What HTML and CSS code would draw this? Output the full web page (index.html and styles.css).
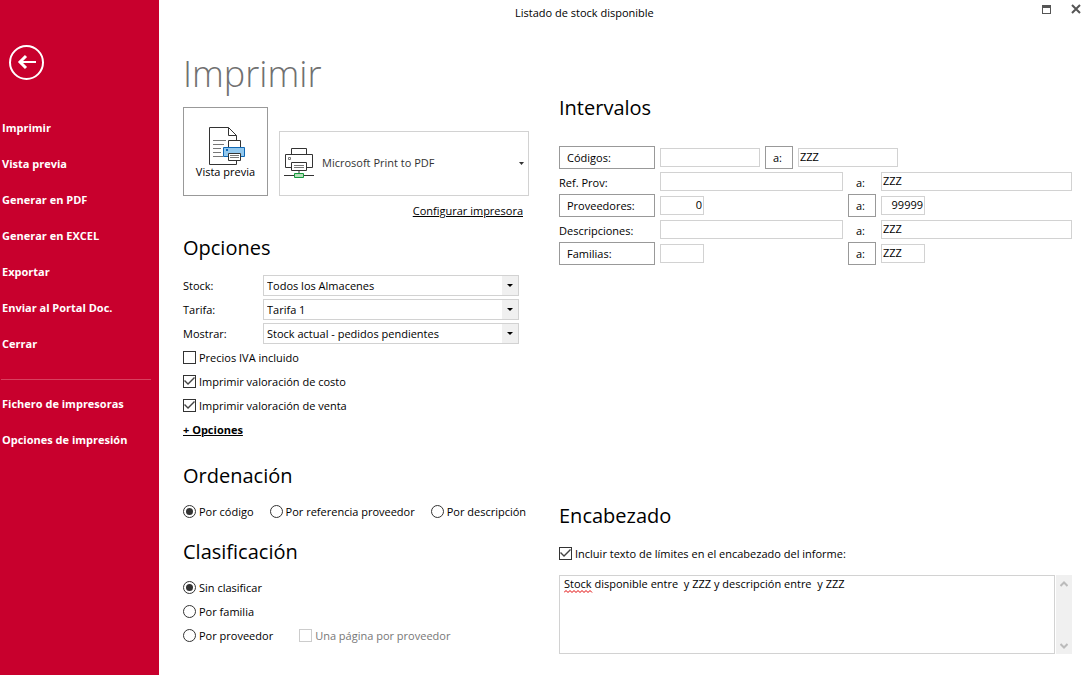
FILE: index.html
```html
<!DOCTYPE html>
<html lang="es">
<head>
<meta charset="utf-8">
<title>Listado de stock disponible</title>
<link rel="stylesheet" href="styles.css">
</head>
<body>
<div class="app">
  <nav class="sidebar">
    <button class="back" type="button" aria-label="Volver">
      <svg width="36" height="36" viewBox="0 0 36 36" fill="none" stroke="#fff">
        <circle cx="17.500" cy="17.500" r="16.500" stroke-width="2"/>
        <path d="M27 17H10.500" stroke-width="2"/>
        <path d="M17 11l-6 6 6 6" stroke-width="3"/>
      </svg>
    </button>
    <ul class="menu">
      <li><a href="#">Imprimir</a></li>
      <li><a href="#">Vista previa</a></li>
      <li><a href="#">Generar en PDF</a></li>
      <li><a href="#">Generar en EXCEL</a></li>
      <li><a href="#">Exportar</a></li>
      <li><a href="#">Enviar al Portal Doc.</a></li>
      <li><a href="#">Cerrar</a></li>
    </ul>
    <hr class="separator">
    <ul class="menu">
      <li><a href="#">Fichero de impresoras</a></li>
      <li><a href="#">Opciones de impresión</a></li>
    </ul>
  </nav>

  <div class="window">
    <header class="titlebar">
      <span class="caption">Listado de stock disponible</span>
      <div class="window-buttons">
        <button type="button" aria-label="Maximizar">
          <svg width="11" height="11" viewBox="0 0 11 11" fill="none" stroke="#555" shape-rendering="crispEdges"><path d="M1.500 1.500h8v8h-8zM1 2.500h9M1 3.500h9"/></svg>
        </button>
        <button type="button" aria-label="Cerrar">
          <svg width="11" height="11" viewBox="0 0 11 11" fill="none" stroke="#555" stroke-width="2"><path d="M1 1l8 8M9 1l-8 8"/></svg>
        </button>
      </div>
    </header>

    <main class="content">
      <div class="left">
        <h1>Imprimir</h1>
        <div class="print-row">
          <button class="preview" type="button">
            <svg width="40" height="39" viewBox="-3 0 40 39" fill="#fff" stroke="#333">
              <path d="M.5.500h19l8 8v29H.5z"/>
              <path d="M19.500.500v8h8" fill="none"/>
              <path d="M4 13.500h13M4 17.500h11M4 21.500h8M4 25.500h8M4 29.500h10" stroke="#777"/>
              <path d="M19.500 20.500v-7h12v7"/>
              <path d="M14.500 20.500h21v9h-21z" fill="#92c8ee" stroke="#1068b5"/>
              <path d="M17 22h2v2h-2z" fill="#1068b5" stroke="none"/>
              <path d="M19.500 26.500h12v7h-12z"/>
              <path d="M21 28.500h9M21 30.500h9" stroke="#777"/>
            </svg>
            <span>Vista previa</span>
          </button>
          <div class="printer">
            <svg class="printer-icon" width="30" height="31" viewBox="0 0 30 31" fill="#fff" stroke="#333">
              <path d="M7.500 7.500v-7h15v7"/>
              <path d="M1.500 6.500h27v13h-27z"/>
              <path d="M4.500 9.500h2v2h-2z" stroke="#777"/>
              <path d="M7.500 14.500h15v8h-15z"/>
              <path d="M10 17.500h10M10 19.500h10" stroke="#777"/>
              <path d="M15 23v3" stroke="#999" stroke-width="2"/>
              <path d="M0 27.500h30"/>
              <path d="M10.500 25.500h9v4h-9z" fill="#b5dfba" stroke="#159b3e"/>
            </svg>
            <select aria-label="Impresora"><option>Microsoft Print to PDF</option></select>
            <svg class="printer-arrow" width="5" height="3" viewBox="0 0 5 3"><path d="M0 0h5L2.500 3z" fill="#333"/></svg>
          </div>
        </div>
        <p class="config"><a href="#">Configurar impresora</a></p>

        <section class="options">
          <h2>Opciones</h2>
          <div class="option">
            <label for="stock">Stock:</label>
            <span class="combo"><select id="stock"><option>Todos los Almacenes</option></select></span>
          </div>
          <div class="option">
            <label for="tarifa">Tarifa:</label>
            <span class="combo"><select id="tarifa"><option>Tarifa 1</option></select></span>
          </div>
          <div class="option">
            <label for="mostrar">Mostrar:</label>
            <span class="combo"><select id="mostrar"><option>Stock actual - pedidos pendientes</option></select></span>
          </div>
          <label class="choice"><input type="checkbox">Precios IVA incluido</label>
          <label class="choice"><input type="checkbox" checked>Imprimir valoración de costo</label>
          <label class="choice"><input type="checkbox" checked>Imprimir valoración de venta</label>
          <a class="more" href="#">+ Opciones</a>
        </section>

        <section class="order">
          <h2>Ordenación</h2>
          <div class="inline-choices">
            <label class="choice"><input type="radio" name="orden" checked>Por código</label>
            <label class="choice"><input type="radio" name="orden">Por referencia proveedor</label>
            <label class="choice"><input type="radio" name="orden">Por descripción</label>
          </div>
        </section>

        <section class="grouping">
          <h2>Clasificación</h2>
          <label class="choice"><input type="radio" name="clase" checked>Sin clasificar</label>
          <label class="choice"><input type="radio" name="clase">Por familia</label>
          <div class="paired-choices">
            <label class="choice"><input type="radio" name="clase">Por proveedor</label>
            <label class="choice disabled"><input type="checkbox" disabled>Una página por proveedor</label>
          </div>
        </section>
      </div>

      <div class="right">
        <section class="ranges">
          <h2>Intervalos</h2>
          <div class="range codes">
            <button class="pick" type="button">Códigos:</button>
            <input type="text" aria-label="Códigos desde">
            <button class="pick" type="button">a:</button>
            <input type="text" aria-label="Códigos hasta" value="ZZZ">
          </div>
          <div class="range">
            <label for="ref-from">Ref. Prov:</label>
            <input id="ref-from" type="text">
            <label class="to" for="ref-to">a:</label>
            <input id="ref-to" type="text" value="ZZZ">
          </div>
          <div class="range">
            <button class="pick" type="button">Proveedores:</button>
            <input class="short number" type="text" aria-label="Proveedores desde" value="0">
            <button class="pick" type="button">a:</button>
            <input class="short number" type="text" aria-label="Proveedores hasta" value="99999">
          </div>
          <div class="range">
            <label for="desc-from">Descripciones:</label>
            <input id="desc-from" type="text">
            <label class="to" for="desc-to">a:</label>
            <input id="desc-to" type="text" value="ZZZ">
          </div>
          <div class="range">
            <button class="pick" type="button">Familias:</button>
            <input class="short" type="text" aria-label="Familias desde">
            <button class="pick" type="button">a:</button>
            <input class="short" type="text" aria-label="Familias hasta" value="ZZZ">
          </div>
        </section>

        <section class="heading-text">
          <h2>Encabezado</h2>
          <label class="choice"><input type="checkbox" checked>Incluir texto de límites en el encabezado del informe:</label>
          <div class="editor">
            <textarea aria-label="Texto del encabezado" spellcheck="false">Stock disponible entre  y ZZZ y descripción entre  y ZZZ</textarea>
            <svg class="squiggle" width="29" height="3" viewBox="0 0 29 3" fill="none" stroke="#e00000"><path d="M0 2.500l2-2 2 2 2-2 2 2 2-2 2 2 2-2 2 2 2-2 2 2 2-2 2 2 2-2 2 2"/></svg>
            <div class="scrollbar">
              <svg width="8" height="6" viewBox="0 0 8 6" fill="none" stroke="#bbb" stroke-width="2"><path d="M.5 5L4 1.500 7.500 5"/></svg>
              <svg width="8" height="6" viewBox="0 0 8 6" fill="none" stroke="#bbb" stroke-width="2"><path d="M.5 1L4 4.500 7.500 1"/></svg>
            </div>
          </div>
        </section>
      </div>
    </main>
  </div>
</div>
</body>
</html>
```
FILE: styles.css
```css
* {
  box-sizing: border-box;
}

body {
  margin: 0;
  background: #fff;
  color: #000;
  font: 11px/16px "Open Sans", "Noto Sans", sans-serif;
}

button,
input,
select,
textarea {
  margin: 0;
  color: inherit;
  font: inherit;
}

button {
  padding: 0;
  border: 0;
  background: none;
}

a {
  color: inherit;
}

.app {
  display: flex;
  min-height: 100vh;
}

.sidebar {
  flex: none;
  width: 159px;
  padding-top: 45px;
  background: #c8002d;
  color: #fff;
}

.back {
  display: block;
  height: 36px;
  margin: 0 0 29px 9px;
}

.menu {
  margin: 0;
  padding: 0 0 0 2px;
  list-style: none;
}

.menu a {
  display: block;
  font-weight: 700;
  line-height: 36px;
  text-decoration: none;
}

.separator {
  height: 1px;
  margin: 17px 8px 6px 1px;
  border: 0;
  background: #d9405f;
}

.window {
  display: flex;
  flex: 1;
  flex-direction: column;
}

.titlebar {
  display: flex;
  align-items: flex-start;
  justify-content: space-between;
  height: 26px;
  padding: 4px 9px 0 356px;
}

.caption {
  line-height: 18px;
}

.window-buttons {
  display: flex;
  gap: 19px;
}

.window-buttons button {
  height: 11px;
}

.window-buttons svg {
  display: block;
}

.content {
  display: flex;
  flex: 1;
  gap: 30px;
  padding: 0 19px 21px 24px;
}

.left {
  flex: none;
  width: 346px;
  padding-top: 22px;
}

.right {
  display: flex;
  flex: 1;
  flex-direction: column;
  justify-content: space-between;
  padding-top: 66px;
}

h1,
h2 {
  margin: 0;
  font-weight: 400;
}

h1 {
  color: #707070;
  font-size: 36px;
  font-weight: 300;
  line-height: 52px;
}

h2 {
  margin-bottom: 10px;
  font-size: 20px;
  line-height: 32px;
}

.print-row {
  display: flex;
  align-items: flex-end;
  gap: 11px;
  margin-top: 7px;
}

.preview {
  display: flex;
  flex-direction: column;
  align-items: center;
  width: 85px;
  height: 89px;
  padding-top: 19px;
  border: 1px solid #999;
  line-height: 12px;
}

.preview svg {
  flex: none;
}

.printer {
  position: relative;
  flex: 1;
}

.printer select {
  width: 100%;
  height: 65px;
  padding: 0 20px 2px 42px;
  border: 1px solid #d2d2d2;
  border-radius: 0;
  background: #fff;
  color: #333;
  appearance: none;
}

.printer-icon {
  position: absolute;
  top: 17px;
  left: 5px;
}

.printer-arrow {
  position: absolute;
  top: 31px;
  right: 5px;
}

.config {
  margin: 6px 6px 0 0;
  line-height: 18px;
  text-align: right;
}

.options {
  margin-top: 12px;
}

.option {
  display: flex;
  align-items: center;
  height: 24px;
  padding-right: 10px;
}

.option label {
  width: 80px;
}

.combo {
  position: relative;
  flex: 1;
  height: 21px;
  margin-bottom: 1px;
}

.combo select {
  display: block;
  width: 100%;
  height: 21px;
  padding: 1px 18px 0 3px;
  border: 1px solid #d2d2d2;
  border-radius: 0;
  background: linear-gradient(#f0f0f0, #f0f0f0) right / 16px 100% no-repeat #fff;
  appearance: none;
}

.combo::after {
  position: absolute;
  top: 9px;
  right: 6px;
  border: solid transparent;
  border-width: 3px 3px 0;
  border-top-color: #000;
  content: "";
}

.choice {
  display: flex;
  align-items: center;
  gap: 3px;
  height: 24px;
}

.choice input {
  display: grid;
  place-items: center;
  flex: none;
  width: 13px;
  height: 13px;
  margin-bottom: 1px;
  border: 1px solid #333;
  background: #fff;
  appearance: none;
}

.choice input[type="radio"] {
  border-radius: 50%;
}

.choice input[type="radio"]:checked::before {
  width: 7px;
  height: 7px;
  border-radius: 50%;
  background: #333;
  content: "";
}

.choice input[type="checkbox"]:checked::before {
  width: 11px;
  height: 11px;
  background: #444;
  clip-path: polygon(0 5px, 1px 4px, 4px 7px, 10px 1px, 11px 2px, 4px 9px);
  content: "";
}

.disabled {
  color: #777;
}

.choice input:disabled {
  border-color: #ccc;
}

.more {
  display: block;
  font-weight: 700;
  line-height: 24px;
}

.order {
  margin-top: 18px;
}

.order h2,
.grouping h2 {
  margin-bottom: 8px;
}

.inline-choices {
  display: flex;
  gap: 16px;
}

.grouping {
  margin-top: 12px;
}

.paired-choices {
  display: flex;
  gap: 26px;
}

.ranges h2 {
  margin-bottom: 22px;
}

.range {
  display: grid;
  grid-template-columns: 96px 183px 28px 1fr;
  column-gap: 5px;
  height: 24px;
}

.codes {
  grid-template-columns: 96px 100px 28px 100px;
}

.pick {
  height: 23px;
  padding: 0 7px;
  border: 1px solid #999;
  text-align: left;
}

.range label {
  padding-top: 5px;
}

.range .to {
  padding-left: 8px;
}

.range input {
  width: 100%;
  height: 19px;
  margin-top: 2px;
  padding: 0 1px 2px;
  border: 1px solid #d2d2d2;
}

.range .short {
  width: 44px;
}

.number {
  text-align: right;
}

.editor {
  position: relative;
  display: flex;
  gap: 1px;
  margin-top: 9px;
}

.editor textarea {
  flex: 1;
  height: 79px;
  padding: 0 4px;
  border: 1px solid #d2d2d2;
  resize: none;
}

.squiggle {
  position: absolute;
  top: 15px;
  left: 5px;
}

.scrollbar {
  display: flex;
  flex-direction: column;
  align-items: center;
  justify-content: space-between;
  width: 16px;
  padding: 6px 0 5px;
  background: #f0f0f0;
}
```
